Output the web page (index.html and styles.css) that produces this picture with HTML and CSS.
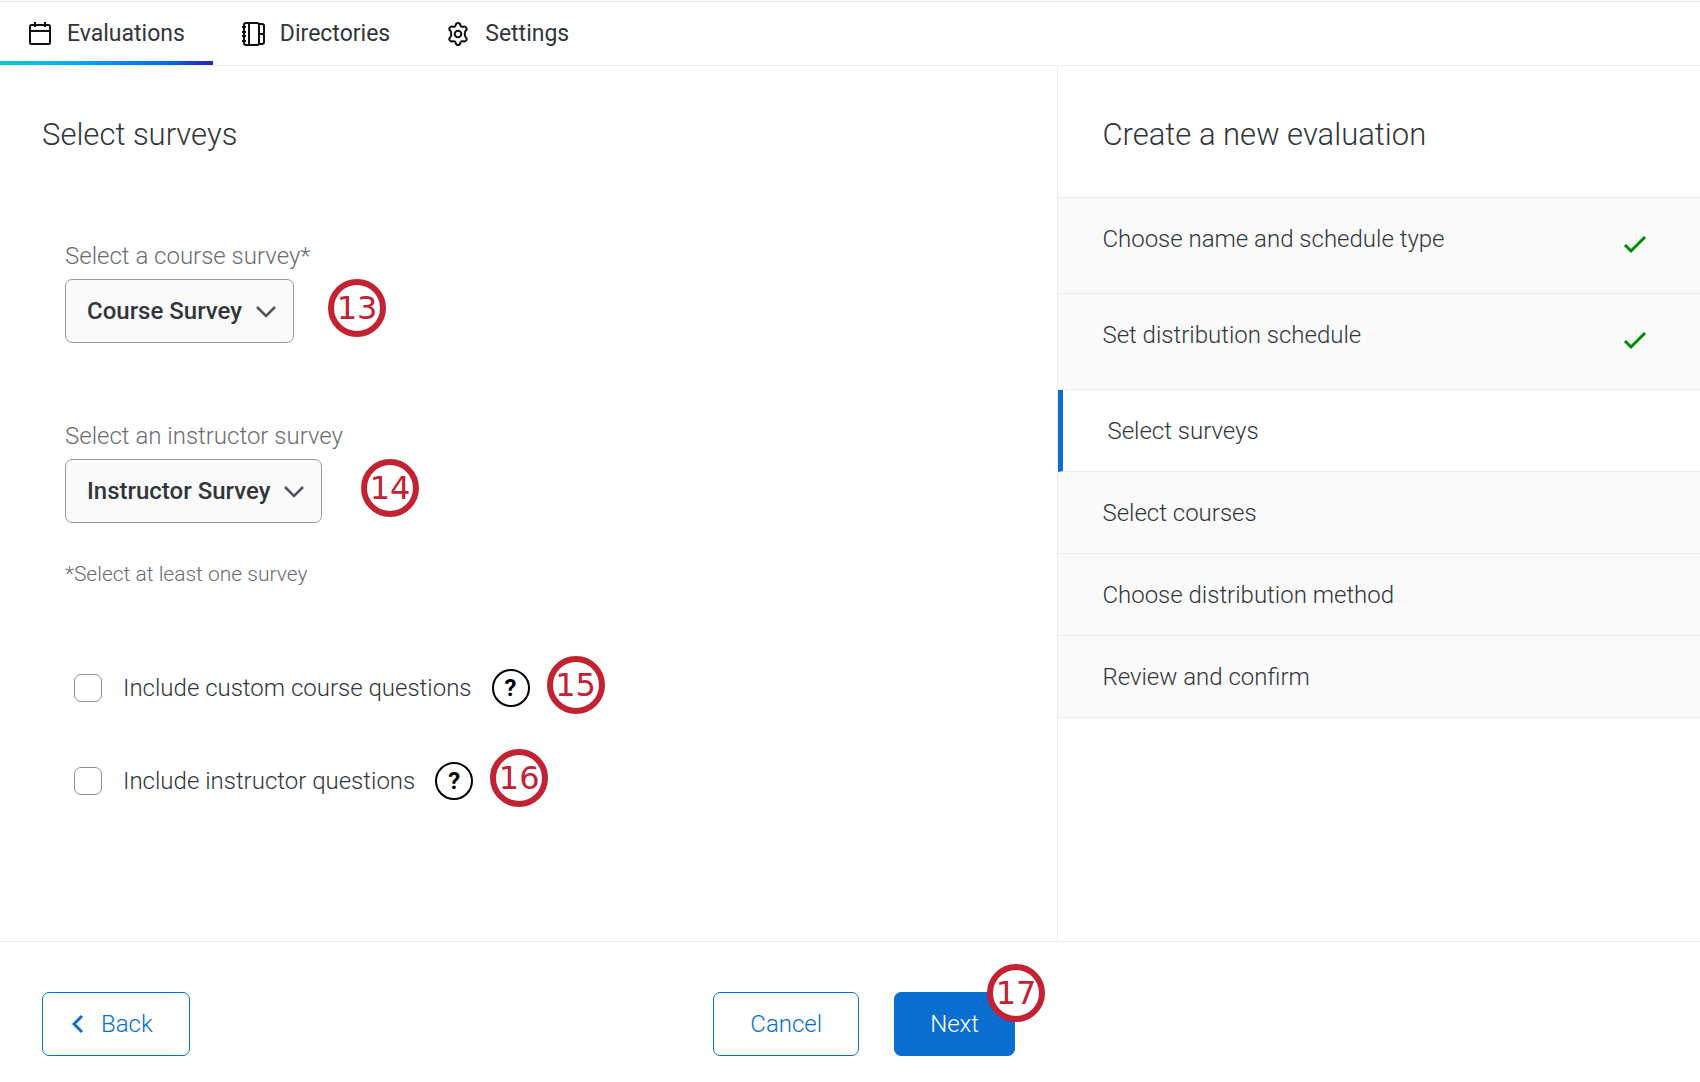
FILE: index.html
```
<!DOCTYPE html>
<html lang="en">
  <head>
    <meta charset="utf-8" />
    <meta name="viewport" content="width=device-width, initial-scale=1" />
    <title>Create a new evaluation</title>
    <link rel="stylesheet" href="styles.css">
  </head>
  <body>
    <nav class="tabs">
      <a class="tab active" href="#evaluations">
        <svg class="tab-icon" viewBox="0 0 24 24">
          <rect x="2" y="3" width="20" height="19" rx="1.5" />
          <path d="M2 9h20M7 0v5M17 0v5" />
        </svg>
        Evaluations
      </a>
      <a class="tab" href="#directories">
        <svg class="tab-icon" viewBox="0 0 24 24">
          <path d="M3 3a2 2 0 0 1 2-2h11a2 2 0 0 1 2 2v18a2 2 0 0 1-2 2H5a2 2 0 0 1-2-2z" />
          <path d="M8 1v22M1 5h4M1 10h4M1 14h4M1 19h4" />
          <path d="M18 2h3a2 2 0 0 1 2 2v7l-1 1 1 1v7a2 2 0 0 1-2 2h-3M18 12h4" />
        </svg>
        Directories
      </a>
      <a class="tab" href="#settings">
        <svg class="tab-icon" viewBox="0 0 24 24">
          <path d="M12 1c1.500 0 2 .5 2.300 2 .3 1.500 1.500 2.200 3 1.700 1.500-.5 2.200-.2 3 1 .8 1.400.6 2.100-.6 3.100-1.100.9-1.100 1.500-.9 3.200-.2 1.700-.2 2.300.9 3.200 1.200 1 1.400 1.700.6 3.100-.8 1.200-1.500 1.500-3 1-1.500-.5-2.700.2-3 1.700-.3 1.500-.8 2-2.300 2s-2-.5-2.300-2c-.3-1.500-1.500-2.200-3-1.700-1.500.5-2.200.2-3-1-.8-1.400-.6-2.100.6-3.100 1.100-.9 1.100-1.500.9-3.200.2-1.700.2-2.300-.9-3.200-1.200-1-1.400-1.700-.6-3.100.8-1.200 1.500-1.500 3-1 1.500.5 2.700-.2 3-1.700.3-1.500.8-2 2.300-2z" />
          <circle cx="12" cy="12" r="3.300" />
        </svg>
        Settings
      </a>
    </nav>

    <div class="content">
      <main class="main">
        <h1>Select surveys</h1>

        <form class="survey-form" id="survey-form">
          <div class="field">
            <label for="course">Select a course survey*</label>
            <div class="row course-row">
              <div class="select-wrap">
                <select id="course" name="course">
                  <option>Course Survey</option>
                </select>
                <svg class="chevron" viewBox="0 0 20 12"><path d="M1 1l9 9 9-9" /></svg>
              </div>
              <span class="step-badge">13</span>
            </div>
          </div>

          <div class="field">
            <label for="instructor">Select an instructor survey</label>
            <div class="row instructor-row">
              <div class="select-wrap">
                <select id="instructor" name="instructor">
                  <option>Instructor Survey</option>
                </select>
                <svg class="chevron" viewBox="0 0 20 12"><path d="M1 1l9 9 9-9" /></svg>
              </div>
              <span class="step-badge">14</span>
            </div>
          </div>

          <p class="hint">*Select at least one survey</p>

          <div class="check-row">
            <input type="checkbox" id="custom-questions" />
            <label for="custom-questions">Include custom course questions</label>
            <button class="help" type="button" aria-label="Help">?</button>
            <span class="step-badge">15</span>
          </div>
          <div class="check-row">
            <input type="checkbox" id="instructor-questions" />
            <label for="instructor-questions">Include instructor questions</label>
            <button class="help" type="button" aria-label="Help">?</button>
            <span class="step-badge">16</span>
          </div>
        </form>
      </main>

      <aside class="sidebar">
        <h2>Create a new evaluation</h2>
        <ol class="steps">
          <li class="done">
            Choose name and schedule type
            <svg class="check" viewBox="0 0 24 20"><path d="M2 11l6 6L22 3" /></svg>
          </li>
          <li class="done">
            Set distribution schedule
            <svg class="check" viewBox="0 0 24 20"><path d="M2 11l6 6L22 3" /></svg>
          </li>
          <li class="current">Select surveys</li>
          <li>Select courses</li>
          <li>Choose distribution method</li>
          <li>Review and confirm</li>
        </ol>
      </aside>
    </div>

    <footer class="footer">
      <div class="actions">
        <button class="btn back" type="button">
          <svg class="back-icon" viewBox="0 0 12 20"><path d="M10 2l-8 8 8 8" /></svg>
          Back
        </button>
        <button class="btn cancel" type="button">Cancel</button>
        <div class="next-wrap">
          <button class="btn next" type="submit" form="survey-form">Next</button>
          <span class="step-badge">17</span>
        </div>
      </div>
    </footer>
  </body>
</html>
```
FILE: styles.css
```
* {
  box-sizing: border-box;
}

body {
  margin: 0;
  min-height: 100vh;
  display: flex;
  flex-direction: column;
  background-color: #fff;
  color: #32363a;
  font-family: Roboto, Arial, Helvetica, sans-serif;
  font-size: 24px;
  font-weight: 300;
  line-height: 32px;
}

svg {
  fill: none;
  stroke: currentColor;
  stroke-width: 2;
  flex-shrink: 0;
}

/* top tabs */
.tabs {
  display: flex;
  border-top: 1px solid #e6ecec;
  border-bottom: 1px solid #e9eeee;
  margin-top: 1px;
}

.tab {
  display: flex;
  align-items: center;
  gap: 15px;
  height: 63px;
  padding: 0 28px;
  color: #32363a;
  font-size: 23px;
  font-weight: 400;
  text-decoration: none;
}

.tab.active {
  padding-top: 4px;
  border-bottom: 4px solid;
  border-image: linear-gradient(to right, #0cc, #00b4f0 30%, #0768dd 80%, #2c1fa8) 1;
}

.tab-icon {
  width: 24px;
  height: 24px;
  color: #111;
  stroke-linejoin: round;
}

/* page body */
.content {
  flex: 1;
  display: flex;
}

.main {
  flex: 1;
  padding: 49px 42px;
}

h1,
h2 {
  margin: 0;
  font-size: 31px;
  font-weight: 300;
  line-height: 40px;
}

.survey-form {
  padding: 85px 23px 0;
}

.field {
  color: #6a6d70;
}

.field + .field {
  margin-top: 77px;
}

.field > label {
  display: block;
  height: 39px;
}

.row {
  display: flex;
  align-items: center;
  height: 64px;
}

.course-row {
  gap: 34px;
}

.instructor-row {
  gap: 39px;
}

.select-wrap {
  position: relative;
}

select {
  appearance: none;
  height: 64px;
  padding: 0 50px 0 21px;
  border: 1px solid #999;
  border-radius: 7px;
  background-color: #fafafa;
  color: #32363a;
  font: inherit;
  font-weight: 500;
}

.chevron {
  position: absolute;
  right: 18px;
  top: 27px;
  width: 20px;
  height: 12px;
  color: #51555a;
  stroke-width: 2.5;
  pointer-events: none;
}

.step-badge {
  display: flex;
  align-items: center;
  justify-content: center;
  width: 58px;
  height: 58px;
  margin-bottom: 6px;
  border: 6px solid #c32232;
  border-radius: 50%;
  background-color: #fff;
  color: #c32232;
  font-family: "DejaVu Sans", Verdana, sans-serif;
  font-size: 32px;
  font-weight: 400;
}

.hint {
  margin: 35px 0 69px;
  color: #6a6d70;
  font-size: 21px;
}

.check-row {
  display: flex;
  align-items: center;
  height: 58px;
  padding-left: 9px;
}

.check-row + .check-row {
  margin-top: 35px;
}

input[type="checkbox"] {
  appearance: none;
  width: 28px;
  height: 28px;
  margin: 0 21px 0 0;
  border: 1px solid #89919a;
  border-radius: 7px;
}

.help {
  width: 38px;
  height: 38px;
  margin: 0 17px 0 20px;
  padding: 0;
  border: 2px solid #000;
  border-radius: 50%;
  background: none;
  color: #000;
  font: inherit;
  font-weight: 700;
  line-height: 30px;
}

/* wizard steps */
.sidebar {
  width: 37.8%;
  border-left: 1px solid #ededed;
}

h2 {
  padding: 49px 44px 42px;
}

.steps {
  margin: 0;
  padding: 0;
  list-style: none;
  border-top: 1px solid #ededed;
}

.steps li {
  display: flex;
  justify-content: space-between;
  padding: 25px 53px 24px 44px;
  border-bottom: 1px solid #ededed;
  background-color: #fafafa;
}

.steps .done {
  padding-bottom: 38px;
}

.steps .current {
  border-left: 5px solid #0a6ed1;
  background-color: #fff;
}

.check {
  width: 24px;
  height: 20px;
  margin-top: 11px;
  color: #008a00;
  stroke-width: 3;
}

/* footer buttons */
.footer {
  height: 141px;
  padding-top: 50px;
  border-top: 1px solid #ededed;
}

.actions {
  display: flex;
  width: 62%;
  padding: 0 39px 0 42px;
}

.btn {
  height: 64px;
  padding: 0 36px;
  border: 1px solid #0a6ed1;
  border-radius: 7px;
  background-color: #fff;
  color: #0a6ed1;
  font: inherit;
}

.back {
  display: flex;
  align-items: center;
  gap: 17px;
  padding-left: 29px;
  margin-right: auto;
}

.back-icon {
  width: 12px;
  height: 20px;
  stroke-width: 3;
}

.cancel {
  margin-right: 35px;
}

.next-wrap {
  position: relative;
}

.next {
  padding: 0 35px;
  background-color: #0a6ed1;
  color: #fff;
}

.next-wrap .step-badge {
  position: absolute;
  top: -28px;
  right: -30px;
}
```
